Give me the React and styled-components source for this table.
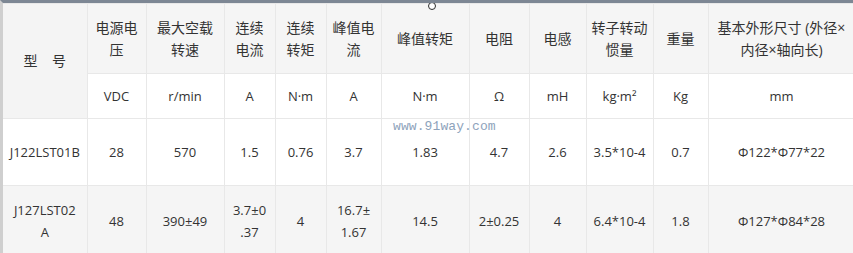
import React from "react";
import styled, { createGlobalStyle } from "styled-components";

const GlobalStyle = createGlobalStyle`
  body {
    margin: 0;
    background: #ffffff;
    font-family: "Open Sans", "Noto Sans CJK SC", sans-serif;
  }
`;

const Frame = styled.div`
  position: relative;
  width: 853px;
  height: 253px;
  overflow: hidden;
  box-sizing: border-box;
  border-top: 3px solid #7d8794;
  border-left: 3px solid #cfcfcf;
  background: #ffffff;
`;

const Table = styled.table`
  border-collapse: collapse;
  table-layout: fixed;
  width: 852px;
  color: #333333;
  text-align: center;
`;

const Row = styled.tr`
  height: ${(p) => p.$h}px;
  background: ${(p) => (p.$grey ? "#f5f5f5" : "#ffffff")};
`;

const Cell = styled.td`
  border: 1px solid #e8e8e8;
  padding: 0 4px;
  font-family: "Open Sans", "Noto Sans CJK SC", sans-serif;
  font-size: ${(p) => (p.$head ? 14 : 13)}px;
  line-height: 22px;
  white-space: nowrap;
  vertical-align: middle;
  background: ${(p) => (p.$grey ? "#f4f4f4" : "transparent")};
  &:first-child {
    border-left: none;
  }
`;

const Watermark = styled.div`
  position: absolute;
  left: 390px;
  top: 116px;
  font-family: "Liberation Mono", monospace;
  font-size: 13px;
  letter-spacing: 0.1px;
  color: #8ea3bb;
  pointer-events: none;
`;

const Ring = styled.div`
  position: absolute;
  left: 425px;
  top: -1px;
  width: 6px;
  height: 6px;
  border: 1.3px solid #2c2c2c;
  border-radius: 50%;
  background: #ffffff;
`;

const widths = [84, 59, 78, 51, 51, 55, 88, 60, 57, 67, 55, 147];

const headers = [
  ["电源电", "压"],
  ["最大空载", "转速"],
  ["连续", "电流"],
  ["连续", "转矩"],
  ["峰值电", "流"],
  ["峰值转矩"],
  ["电阻"],
  ["电感"],
  ["转子转动", "惯量"],
  ["重量"],
  ["基本外形尺寸 (外径×", "内径×轴向长)"],
];

const units = ["VDC", "r/min", "A", "N·m", "A", "N·m", "Ω", "mH", "kg·m²", "Kg", "mm"];

const rows = [
  [
    ["J122LST01B"], ["28"], ["570"], ["1.5"], ["0.76"], ["3.7"], ["1.83"],
    ["4.7"], ["2.6"], ["3.5*10-4"], ["0.7"], ["Φ122*Φ77*22"],
  ],
  [
    ["J127LST02", "A"], ["48"], ["390±49"], ["3.7±0", ".37"], ["4"],
    ["16.7±", "1.67"], ["14.5"], ["2±0.25"], ["4"], ["6.4*10-4"], ["1.8"],
    ["Φ127*Φ84*28"],
  ],
];

const Lines = ({ lines }) =>
  lines.map((line, i) => (
    <React.Fragment key={i}>
      {i > 0 && <br />}
      {line}
    </React.Fragment>
  ));

const App = () => {
  return (
    <Frame>
      <GlobalStyle />
      <Table>
        <colgroup>
          {widths.map((w, i) => (
            <col key={i} style={{ width: w }} />
          ))}
        </colgroup>
        <tbody>
          <Row $h={70} $grey>
            <Cell rowSpan={2} $grey $head>
              型&nbsp;&nbsp;&nbsp;&nbsp;号
            </Cell>
            {headers.map((h, i) => (
              <Cell key={i} $head>
                <Lines lines={h} />
              </Cell>
            ))}
          </Row>
          <Row $h={45}>
            {units.map((u, i) => (
              <Cell key={i}>{u}</Cell>
            ))}
          </Row>
          {rows.map((r, ri) => (
            <Row key={ri} $h={ri === 0 ? 67 : 70} $grey={ri % 2 === 1}>
              {r.map((c, ci) => (
                <Cell key={ci}>
                  <Lines lines={c} />
                </Cell>
              ))}
            </Row>
          ))}
        </tbody>
      </Table>
      <Watermark>www.91way.com</Watermark>
      <Ring />
    </Frame>
  );
};

export default App;
